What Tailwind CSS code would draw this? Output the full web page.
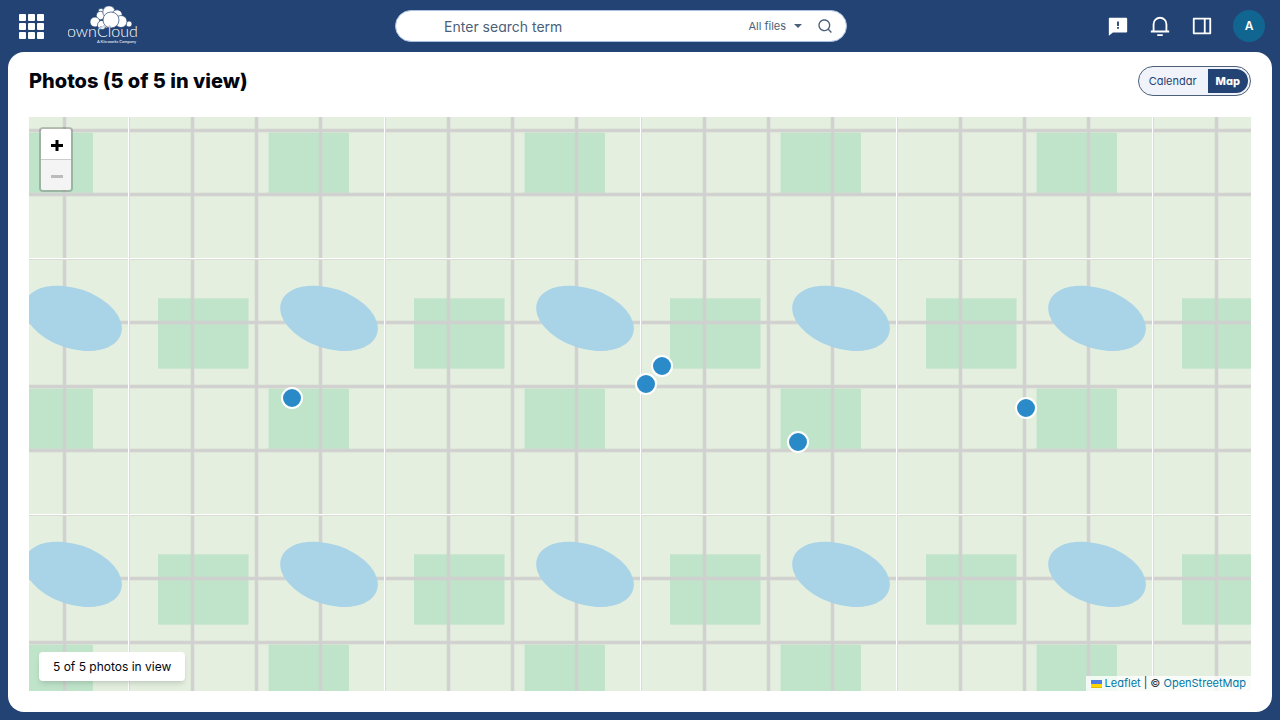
<!DOCTYPE html>
<html lang="en">

<head>
    <title>Photos - ownCloud</title>
    <meta charset="UTF-8">
    <meta name="viewport" content="width=device-width, initial-scale=1.0">
    <script src="https://cdn.jsdelivr.net/npm/@tailwindcss/browser@4"></script>
</head>

<body class="flex h-screen flex-col overflow-hidden bg-[#224373] font-['Inter',sans-serif] text-[#041223]">
    <header class="grid h-[52px] shrink-0 grid-cols-[9fr_auto_10fr] items-center pr-[15px] pl-[19px] text-white">
        <div class="flex items-center gap-6">
            <button type="button" aria-label="Application switcher">
                <svg class="size-[25px]" viewBox="0 0 25 25" fill="currentColor">
                    <rect x="0" y="0" width="7" height="7" rx="1" />
                    <rect x="9" y="0" width="7" height="7" rx="1" />
                    <rect x="18" y="0" width="7" height="7" rx="1" />
                    <rect x="0" y="9" width="7" height="7" rx="1" />
                    <rect x="9" y="9" width="7" height="7" rx="1" />
                    <rect x="18" y="9" width="7" height="7" rx="1" />
                    <rect x="0" y="18" width="7" height="7" rx="1" />
                    <rect x="9" y="18" width="7" height="7" rx="1" />
                    <rect x="18" y="18" width="7" height="7" rx="1" />
                </svg>
            </button>
            <a href="#" aria-label="ownCloud">
                <svg class="h-[40px] w-[70px]" viewBox="0 0 70 40">
                    <g fill="#fff" stroke="#224373" stroke-width="0.7">
                        <circle cx="33" cy="5" r="2.700" />
                        <circle cx="32.500" cy="9.500" r="4.200" />
                        <circle cx="41" cy="6" r="6.200" />
                        <circle cx="49" cy="9" r="5.200" />
                        <circle cx="27" cy="16" r="5" />
                        <circle cx="61" cy="18" r="3" />
                        <circle cx="53" cy="15.500" r="6" />
                        <circle cx="34" cy="19" r="4.500" />
                        <circle cx="43" cy="14" r="8" />
                    </g>
                    <text x="-1" y="31" font-size="16" font-family="Lato" font-weight="300" fill="#fff">own</text>
                    <text x="29" y="31" font-size="16" font-family="Lato" font-weight="300" fill="#fff" stroke="#224373" stroke-width="0.6" paint-order="stroke">Cloud</text>
                    <text x="68" y="37" font-size="4" font-family="Lato" font-weight="400" text-anchor="end" fill="#fff">A Kiteworks Company</text>
                </svg>
            </a>
        </div>

        <form role="search" class="flex h-8 w-[452px] items-center rounded-full border border-[#a9bfe0] bg-white pr-[13px] pl-12 text-[#4c5f79] [font-feature-settings:'cv11']">
            <input type="text" aria-label="Enter search term" placeholder="Enter search term" class="h-full min-w-0 flex-1 pt-px text-sm outline-none placeholder:text-[#4c5f79]">
            <button type="button" class="flex items-center gap-2 text-[11px]">
                All files
                <svg class="h-1 w-2" viewBox="0 0 8 4" fill="currentColor"><path d="M0 0h8L4 4z" /></svg>
            </button>
            <button type="submit" aria-label="Search" class="ml-[15px]">
                <svg class="size-4" viewBox="0 0 24 24" fill="currentColor"><path d="M18.031 16.617l4.283 4.282-1.415 1.415-4.282-4.283A8.960 8.960 0 0 1 11 20c-4.968 0-9-4.032-9-9s4.032-9 9-9 9 4.032 9 9a8.960 8.960 0 0 1-1.969 5.617zm-2.006-.742A6.977 6.977 0 0 0 18 11c0-3.868-3.133-7-7-7-3.868 0-7 3.132-7 7 0 3.867 3.132 7 7 7a6.977 6.977 0 0 0 4.875-1.975l.15-.15z" /></svg>
            </button>
        </form>

        <div class="flex items-center justify-end gap-5">
            <button type="button" aria-label="Feedback">
                <svg class="size-[22px]" viewBox="0 0 24 24" fill="currentColor"><path d="M6.455 19L2 22.500V4a1 1 0 0 1 1-1h18a1 1 0 0 1 1 1v14a1 1 0 0 1-1 1H6.455zM11 13v2h2v-2h-2zm0-6v5h2V7h-2z" /></svg>
            </button>
            <button type="button" aria-label="Notifications">
                <svg class="size-[22px]" viewBox="0 0 24 24" fill="currentColor"><path d="M20 17h2v2H2v-2h2v-7a8 8 0 1 1 16 0v7zm-2 0v-7a6 6 0 1 0-12 0v7h12zm-9 4h6v2H9v-2z" /></svg>
            </button>
            <button type="button" aria-label="Toggle sidebar">
                <svg class="size-[22px]" viewBox="0 0 24 24" fill="currentColor"><path d="M21 3a1 1 0 0 1 1 1v16a1 1 0 0 1-1 1H3a1 1 0 0 1-1-1V4a1 1 0 0 1 1-1h18zm-7 2H4v14h10V5zm6 0h-4v14h4V5z" /></svg>
            </button>
            <button type="button" aria-label="Account" class="size-8 rounded-full bg-[#116591] text-xs font-semibold">A</button>
        </div>
    </header>

    <main class="mx-2 mb-2 flex min-h-0 flex-1 flex-col rounded-2xl bg-white px-[21px] pt-3.5 pb-[21px]">
        <div class="mb-[21px] flex h-[30px] shrink-0 items-center justify-between">
            <h1 class="text-xl font-extrabold text-[#020610]">Photos (5 of 5 in view)</h1>
            <div class="flex h-[30px] items-center gap-[3px] rounded-full border border-[#4c5f79] bg-[#f1f3fa] p-0.5 text-[11px] text-[#224373] [font-feature-settings:'cv11']">
                <button type="button" class="h-6 px-2">Calendar</button>
                <button type="button" class="h-6 rounded-r-full bg-[#224373] px-2 font-extrabold text-white">Map</button>
            </div>
        </div>

        <section aria-label="Photo map" class="relative flex-1 overflow-hidden bg-[#e4efdf]">
            <svg class="absolute inset-0 size-full">
                <defs>
                    <pattern id="tile" x="99" y="141" width="256" height="256" patternUnits="userSpaceOnUse">
                        <rect width="256" height="256" fill="#e4efdf" />
                        <rect x="30" y="40.300" width="90.500" height="70.300" fill="#bfe4ca" />
                        <rect x="140.600" y="130.600" width="80.300" height="60.300" fill="#bfe4ca" />
                        <g stroke="#d0d0d0">
                            <path d="M64.500 0v256M128.500 0v256M192.500 0v256M0 64.500h256M0 128.500h256M0 192.500h256" stroke-width="4" stroke-opacity="0.5" />
                            <path d="M64.500 0v256M128.500 0v256M192.500 0v256M0 64.500h256M0 128.500h256M0 192.500h256" stroke-width="2.500" />
                        </g>
                        <ellipse cx="201" cy="60.300" rx="50.500" ry="30" fill="#a9d3e7" transform="rotate(18.500 201 60.300)" />
                        <path d="M1.500 0v256M0 1.500h256" stroke="#d8dcd6" />
                        <path d="M0.500 0v256M0 0.500h256" stroke="#fff" />
                    </pattern>
                </defs>
                <rect width="100%" height="100%" fill="url(#tile)" />
                <g fill="#2386c8" fill-opacity="0.96" stroke="#fff" stroke-width="2">
                    <circle cx="263" cy="281" r="10" />
                    <circle cx="617" cy="267" r="10" />
                    <circle cx="633" cy="249" r="10" />
                    <circle cx="769" cy="325" r="10" />
                    <circle cx="997" cy="291" r="10" />
                </g>
            </svg>

            <div class="absolute top-2.5 left-2.5 flex flex-col rounded border-2 border-black/20 bg-clip-padding">
                <button type="button" aria-label="Zoom in" class="flex h-[31px] w-[30px] items-center justify-center rounded-t-xs border-b border-[#ccc] bg-white pt-[3px] pl-px text-black">
                    <svg class="h-[11px] w-3" viewBox="0 0 12 11" fill="none" stroke="currentColor" stroke-width="3"><path d="M0 5.500h12M6 0v11" /></svg>
                </button>
                <button type="button" aria-label="Zoom out" disabled class="flex h-[30px] w-[30px] items-center justify-center rounded-b-xs bg-[#f4f4f4] pt-[3px] pl-px text-[#bbb]">
                    <svg class="h-[11px] w-3" viewBox="0 0 12 11" fill="none" stroke="currentColor" stroke-width="3"><path d="M0 5.500h12" /></svg>
                </button>
            </div>

            <p class="absolute bottom-2.5 left-2.5 rounded bg-white px-3.5 py-1.5 text-xs leading-[17px] text-[#020610] shadow-md">5 of 5 photos in view</p>

            <div class="absolute right-0 bottom-0 flex items-center gap-[3px] bg-white/80 px-[5px] text-[11px] leading-[15px] text-[#333] [font-feature-settings:'cv11']">
                <a href="#" class="flex items-center gap-[3px] text-[#0078a8]">
                    <svg class="h-2 w-[11px]" viewBox="0 0 11 8"><path fill="#4c7be1" d="M0 0h11v4H0z" /><path fill="#ffd500" d="M0 4h11v3H0z" /><path fill="#e0bc00" d="M0 7h11v1H0z" /></svg>
                    Leaflet
                </a>
                <span>|</span>
                <span>© <a href="#" class="text-[#0078a8]">OpenStreetMap</a></span>
            </div>
        </section>
    </main>
</body>

</html>
